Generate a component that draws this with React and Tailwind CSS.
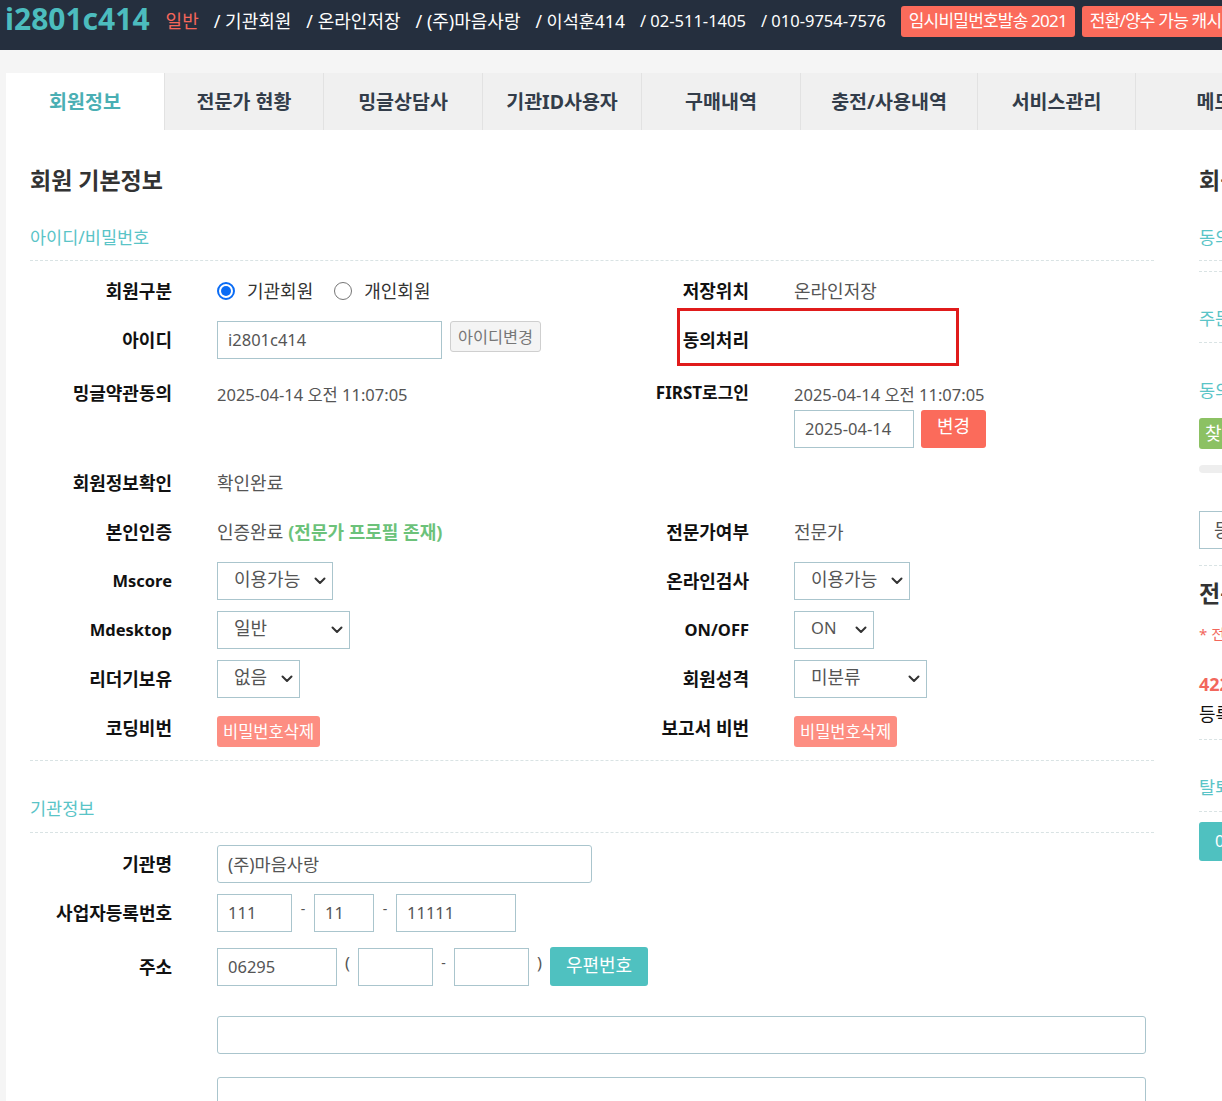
import React from "react";

const F = "font-['Noto_Sans','Noto_Sans_CJK_KR',sans-serif]";

function Chevron() {
  return (
    <svg width="12" height="8" viewBox="0 0 12 8">
      <polyline points="1.5,1.5 6,6 10.5,1.5" fill="none" stroke="#333" strokeWidth="2" strokeLinecap="round" strokeLinejoin="round" />
    </svg>
  );
}

function Select({ w, text, size = "text-[18px]" }) {
  return (
    <div className={`flex h-[38px] items-center justify-between border border-[#aac5cd] pl-[16px] pr-[6px] text-[#555] ${size} ${w}`}>
      <span className="-mt-[3px] leading-[24px]">{text}</span>
      <Chevron />
    </div>
  );
}

function L({ children, size = "text-[18px]" }) {
  return <div className={`w-[142px] shrink-0 text-right font-bold leading-[24px] text-[#111] ${size}`}>{children}</div>;
}

function V({ children, className = "" }) {
  return <div className={`ml-[45px] flex items-center leading-[24px] text-[#555] ${className}`}>{children}</div>;
}

function Half({ children, className = "" }) {
  return <div className={`flex w-[577px] shrink-0 items-center ${className}`}>{children}</div>;
}

function Row({ children, className = "" }) {
  return <div className={`relative flex h-[49px] items-center ${className}`}>{children}</div>;
}

function Radio({ checked }) {
  return checked ? (
    <span className="flex h-[18px] w-[18px] shrink-0 items-center justify-center rounded-full border-2 border-[#0a6cf5]">
      <span className="block h-[10px] w-[10px] rounded-full bg-[#0a6cf5]" />
    </span>
  ) : (
    <span className="block h-[18px] w-[18px] shrink-0 rounded-full border-[1.5px] border-[#767676] bg-white" />
  );
}

function Input({ w, value, rounded = "", size = "text-[16.5px]" }) {
  return (
    <div className={`flex h-[38px] items-center border border-[#aac5cd] bg-white pl-[10px] text-[#555] ${size} ${w} ${rounded}`}>
      {value}
    </div>
  );
}

function DelBtn() {
  return (
    <div className="mt-[8px] flex h-[31px] items-center rounded-[3px] bg-[#fd8e82] px-[6px] text-[16.5px] text-white">비밀번호삭제</div>
  );
}

function Tab({ w, children }) {
  return (
    <div className={`flex shrink-0 items-center justify-center border-l border-[#e2e2e2] bg-[#f0f0f0] text-[19.5px] font-bold text-[#333d4a] ${w}`}>
      {children}
    </div>
  );
}

const dash = "border-dashed border-[#d9e3e4]";
const teal = "text-[17.5px] leading-[24px] text-[#5ac4c7]";

export default function App() {
  return (
    <div className={`h-[1101px] w-[1222px] overflow-hidden bg-[#f5f5f5] ${F}`}>
      {/* header */}
      <div className="h-[50px] overflow-hidden whitespace-nowrap bg-[#252f3e]">
        <div className="flex h-[42px] items-center pl-[5px] text-[18px] text-white">
          <span className="-mt-[4px] text-[30px] font-bold leading-[34px] text-[#4cbcbe]">i2801c414</span>
          <span className="ml-[16px] text-[#f5665a]">일반</span>
          <span className="ml-[15px]">/ 기관회원</span>
          <span className="ml-[15px]">/ 온라인저장</span>
          <span className="ml-[15px]">/ (주)마음사랑</span>
          <span className="ml-[15px] text-[17.5px]">/ 이석훈414</span>
          <span className="ml-[15px] text-[16.5px]">/ 02-511-1405</span>
          <span className="ml-[15px] text-[16.5px]">/ 010-9754-7576</span>
          <span className="ml-[15px] flex h-[31px] shrink-0 items-center rounded-[3px] bg-[#fb6b5b] px-[8px] text-[17px] tracking-[-0.8px]">임시비밀번호발송 2021</span>
          <span className="ml-[7px] flex h-[31px] shrink-0 items-center rounded-[3px] bg-[#fb6b5b] px-[8px] text-[17px] tracking-[-0.8px]">전환/양수 가능 캐시 조회</span>
        </div>
      </div>

      <div className="pl-[6px] pt-[23px]">
        <div className="w-[1400px] bg-white">
          {/* tabs */}
          <div className="flex h-[57px] bg-[#f0f0f0]">
            <div className="flex w-[158px] shrink-0 items-center justify-center bg-white text-[19.5px] font-bold text-[#4aafb4]">회원정보</div>
            <Tab w="w-[159px]">전문가 현황</Tab>
            <Tab w="w-[159px]">밍글상담사</Tab>
            <Tab w="w-[159px]">기관ID사용자</Tab>
            <Tab w="w-[159px]">구매내역</Tab>
            <Tab w="w-[177px]">충전/사용내역</Tab>
            <Tab w="w-[158px]">서비스관리</Tab>
            <Tab w="w-[158px]">메모</Tab>
          </div>

          {/* body */}
          <div className="flex pl-[24px] pt-[34px]">
            {/* left column */}
            <div className="w-[1124px] shrink-0">
              <div className="text-[23px] font-bold leading-[32px] text-[#333]">회원 기본정보</div>
              <div className={`mt-[29px] border-b pb-[11px] ${teal} ${dash}`}>아이디/비밀번호</div>

              <Row className="mt-[5px]">
                <Half>
                  <L>회원구분</L>
                  <V className="text-[18px]">
                    <Radio checked />
                    <span className="ml-[12px] text-[#333]">기관회원</span>
                    <span className="ml-[21px]"><Radio /></span>
                    <span className="ml-[12px] text-[#333]">개인회원</span>
                  </V>
                </Half>
                <Half>
                  <L>저장위치</L>
                  <V className="text-[18px]">온라인저장</V>
                </Half>
              </Row>

              <Row>
                <Half>
                  <L>아이디</L>
                  <V>
                    <Input w="w-[225px]" value="i2801c414" />
                    <div className="ml-[8px] -mt-[6px] flex h-[31px] items-center rounded-[3px] border border-[#cfcfcf] bg-[#f4f4f4] px-[7px] text-[16.3px] text-[#777]">아이디변경</div>
                  </V>
                </Half>
                <Half>
                  <L>동의처리</L>
                </Half>
                <div className="absolute left-[647px] top-[-7px] h-[58px] w-[282px] border-[3px] border-[#e01b1b]" />
              </Row>

              <div className="flex h-[94px] items-start pt-[17px]">
                <Half className="!items-start">
                  <L>밍글약관동의</L>
                  <V className="mt-[2px] text-[16.5px]">2025-04-14 오전 11:07:05</V>
                </Half>
                <Half className="!items-start">
                  <L size="text-[17px]">FIRST로그인</L>
                  <div className="ml-[45px] flex flex-col">
                    <div className="mt-[2px] text-[16.5px] leading-[24px] text-[#555]">2025-04-14 오전 11:07:05</div>
                    <div className="mt-[3px] flex">
                      <Input w="w-[120px]" value="2025-04-14" />
                      <div className="ml-[7px] flex h-[38px] w-[65px] items-center justify-center rounded-[3px] bg-[#fb6b5b] pb-[5px] text-[18px] text-white">변경</div>
                    </div>
                  </div>
                </Half>
              </div>

              <Row>
                <Half>
                  <L>회원정보확인</L>
                  <V className="text-[18px]">확인완료</V>
                </Half>
              </Row>

              <Row>
                <Half>
                  <L>본인인증</L>
                  <V className="text-[18px]">
                    인증완료 <span className="ml-[5px] font-bold text-[#6cc27a]">(전문가 프로필 존재)</span>
                  </V>
                </Half>
                <Half>
                  <L>전문가여부</L>
                  <V className="text-[18px]">전문가</V>
                </Half>
              </Row>

              <Row>
                <Half>
                  <L size="text-[16.5px]">Mscore</L>
                  <V><Select w="w-[116px]" text="이용가능" /></V>
                </Half>
                <Half>
                  <L>온라인검사</L>
                  <V><Select w="w-[116px]" text="이용가능" /></V>
                </Half>
              </Row>

              <Row>
                <Half>
                  <L size="text-[16.5px]">Mdesktop</L>
                  <V><Select w="w-[133px]" text="일반" /></V>
                </Half>
                <Half>
                  <L size="text-[16.5px]">ON/OFF</L>
                  <V><Select w="w-[80px]" text="ON" size="text-[16.5px]" /></V>
                </Half>
              </Row>

              <Row>
                <Half>
                  <L>리더기보유</L>
                  <V><Select w="w-[83px]" text="없음" /></V>
                </Half>
                <Half>
                  <L>회원성격</L>
                  <V><Select w="w-[133px]" text="미분류" /></V>
                </Half>
              </Row>

              <Row>
                <Half>
                  <L>코딩비번</L>
                  <V><DelBtn /></V>
                </Half>
                <Half>
                  <L>보고서 비번</L>
                  <V><DelBtn /></V>
                </Half>
              </Row>

              <div className={`mt-[8px] border-t ${dash}`} />

              <div className={`mt-[35px] border-b pb-[12px] ${teal} ${dash}`}>기관정보</div>

              <Row className="mt-[6px]">
                <Half>
                  <L>기관명</L>
                  <V><Input w="w-[375px]" value="(주)마음사랑" rounded="rounded-[3px]" size="text-[17.5px]" /></V>
                </Half>
              </Row>

              <Row>
                <Half>
                  <L>사업자등록번호</L>
                  <V className="text-[#555]">
                    <Input w="w-[75px]" value="111" />
                    <span className="-mt-[8px] flex w-[22px] justify-center text-[14px]">-</span>
                    <Input w="w-[60px]" value="11" />
                    <span className="-mt-[8px] flex w-[22px] justify-center text-[14px]">-</span>
                    <Input w="w-[120px]" value="11111" />
                  </V>
                </Half>
              </Row>

              <Row className="mt-[5px]">
                <Half className="!w-[900px]">
                  <L>주소</L>
                  <V className="text-[16.5px] text-[#555]">
                    <Input w="w-[120px]" value="06295" />
                    <span className="-mt-[8px] flex w-[21px] justify-center">(</span>
                    <Input w="w-[75px]" value="" />
                    <span className="-mt-[8px] flex w-[21px] justify-center text-[14px]">-</span>
                    <Input w="w-[75px]" value="" />
                    <span className="-mt-[8px] flex w-[21px] justify-center">)</span>
                    <div className="flex h-[39px] w-[98px] items-center justify-center rounded-[3px] bg-[#4fc1c0] pb-[3px] text-[18px] text-white">우편번호</div>
                  </V>
                </Half>
              </Row>

              <div className="ml-[187px] mt-[25px]">
                <Input w="w-[929px]" value="" rounded="rounded-[3px]" />
                <div className="mt-[23px]">
                  <Input w="w-[929px]" value="" rounded="rounded-[3px]" />
                </div>
              </div>
            </div>

            {/* right column */}
            <div className="ml-[45px] w-[400px] shrink-0 whitespace-nowrap">
              <div className="text-[23px] font-bold leading-[32px] text-[#333]">회원 부가정보</div>
              <div className={`mt-[29px] border-b pb-[11px] ${teal} ${dash}`}>동의정보</div>
              <div className={`mt-[10px] border-t ${dash}`} />
              <div className={`mt-[34px] border-b pb-[12px] ${teal} ${dash}`}>주문정보</div>
              <div className={`mt-[35px] ${teal}`}>동의서</div>
              <div className="mt-[16px] flex h-[31px] w-[90px] items-center rounded-[3px] bg-[#8cc163] px-[6px] text-[18px] text-white">찾아보기</div>
              <div className="mt-[16px] h-[8px] w-[200px] rounded-full bg-[#eeeeee]" />
              <div className="mt-[38px] flex h-[38px] w-[300px] items-center border border-[#aac5cd] pl-[14px] text-[18px] text-[#555]">등록</div>
              <div className={`mt-[16px] border-t ${dash}`} />
              <div className="mt-[12px] text-[23px] font-bold leading-[30px] text-[#333]">전문가 정보</div>
              <div className="mt-[16px] text-[15px] leading-[20px] text-[#f2675c]">* 전문가 정보를 입력하세요</div>
              <div className="mt-[28px] text-[18px] font-bold leading-[24px] text-[#f2675c]">4223</div>
              <div className="mt-[6px] text-[18px] leading-[24px] text-[#111]">등록일</div>
              <div className={`mt-[13px] border-t ${dash}`} />
              <div className={`mt-[35px] border-b pb-[12px] ${teal} ${dash}`}>탈퇴정보</div>
              <div className="mt-[10px] flex h-[39px] w-[120px] items-center rounded-[3px] bg-[#4fc1c0] pl-[16px] text-[16.5px] text-white">0</div>
            </div>
          </div>
        </div>
      </div>
    </div>
  );
}
